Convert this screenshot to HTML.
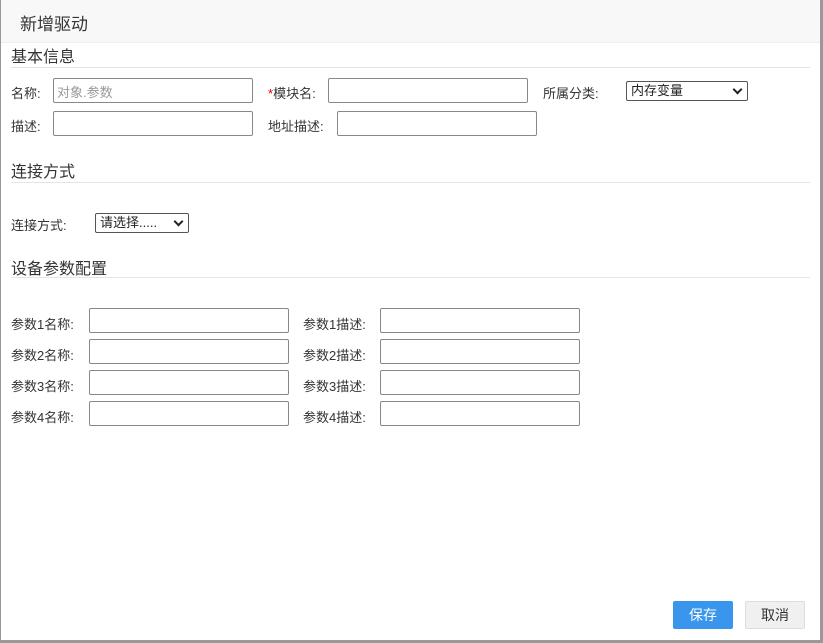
<!DOCTYPE html>
<html><head><meta charset="utf-8"><style>
body{margin:0;width:823px;height:643px;background:#fff;font-family:"Liberation Sans","Noto Sans CJK SC",sans-serif;font-size:13px;color:#333;position:relative;overflow:hidden}
.a{position:absolute;white-space:nowrap}
.in{position:absolute;border:1px solid #888;border-radius:2px;background:#fff;box-sizing:border-box;height:25px}
.sec{position:absolute;left:11px;font-size:16px;color:#333}
.ln{position:absolute;left:11px;width:799px;height:1px;background:#e5e5e5}
.sel{position:absolute;border:1px solid #555;border-radius:2px;box-sizing:border-box;height:20px;font-size:13px;padding-left:4px;line-height:18px;color:#222}
.sel:after{content:"";position:absolute;right:6px;top:4px;width:5px;height:5px;border-right:2px solid #222;border-bottom:2px solid #222;transform:rotate(45deg)}
</style></head><body>
<div class="a" style="left:0;top:0;width:820px;height:42px;background:#f8f8f8;border-bottom:1px solid #eee"></div>
<div class="a" style="left:0;top:0;width:1px;height:643px;background:#999"></div>
<div class="a" style="left:820px;top:0;width:3px;height:643px;background:#999"></div>
<div class="a" style="left:0;top:640px;width:823px;height:3px;background:#999"></div>
<div class="a" style="left:20px;top:10px;font-size:17px;color:#333">新增驱动</div>
<div class="sec" style="top:43px">基本信息</div><div class="ln" style="top:67px"></div>
<div class="a" style="left:11px;top:83px">名称:</div>
<div class="in" style="left:53px;top:78px;width:200px;color:#999;padding:3px 0 0 3px">对象.参数</div>
<div class="a" style="left:268px;top:83px"><span style="color:#d00">*</span>模块名:</div>
<div class="in" style="left:328px;top:78px;width:200px"></div>
<div class="a" style="left:543px;top:83px">所属分类:</div>
<div class="sel" style="left:626px;top:81px;width:122px">内存变量</div>
<div class="a" style="left:11px;top:116px">描述:</div>
<div class="in" style="left:53px;top:111px;width:200px"></div>
<div class="a" style="left:268px;top:116px">地址描述:</div>
<div class="in" style="left:337px;top:111px;width:200px"></div>
<div class="sec" style="top:158px">连接方式</div><div class="ln" style="top:182px"></div>
<div class="a" style="left:11px;top:215px">连接方式:</div>
<div class="sel" style="left:95px;top:213px;width:94px">请选择.....</div>
<div class="sec" style="top:255px">设备参数配置</div><div class="ln" style="top:277px"></div>
<div class="a" style="left:11px;top:314px">参数1名称:</div><div class="in" style="left:89px;top:308px;width:200px"></div>
<div class="a" style="left:303px;top:314px">参数1描述:</div><div class="in" style="left:380px;top:308px;width:200px"></div>
<div class="a" style="left:11px;top:345px">参数2名称:</div><div class="in" style="left:89px;top:339px;width:200px"></div>
<div class="a" style="left:303px;top:345px">参数2描述:</div><div class="in" style="left:380px;top:339px;width:200px"></div>
<div class="a" style="left:11px;top:376px">参数3名称:</div><div class="in" style="left:89px;top:370px;width:200px"></div>
<div class="a" style="left:303px;top:376px">参数3描述:</div><div class="in" style="left:380px;top:370px;width:200px"></div>
<div class="a" style="left:11px;top:407px">参数4名称:</div><div class="in" style="left:89px;top:401px;width:200px"></div>
<div class="a" style="left:303px;top:407px">参数4描述:</div><div class="in" style="left:380px;top:401px;width:200px"></div>
<div class="a" style="left:673px;top:601px;width:60px;height:28px;background:#3a95ec;border-radius:2px;color:#fff;text-align:center;line-height:28px;font-size:14px">保存</div>
<div class="a" style="left:745px;top:601px;width:60px;height:28px;background:#f0f0f0;border:1px solid #ddd;box-sizing:border-box;border-radius:2px;color:#333;text-align:center;line-height:26px;font-size:14px">取消</div>
</body></html>
